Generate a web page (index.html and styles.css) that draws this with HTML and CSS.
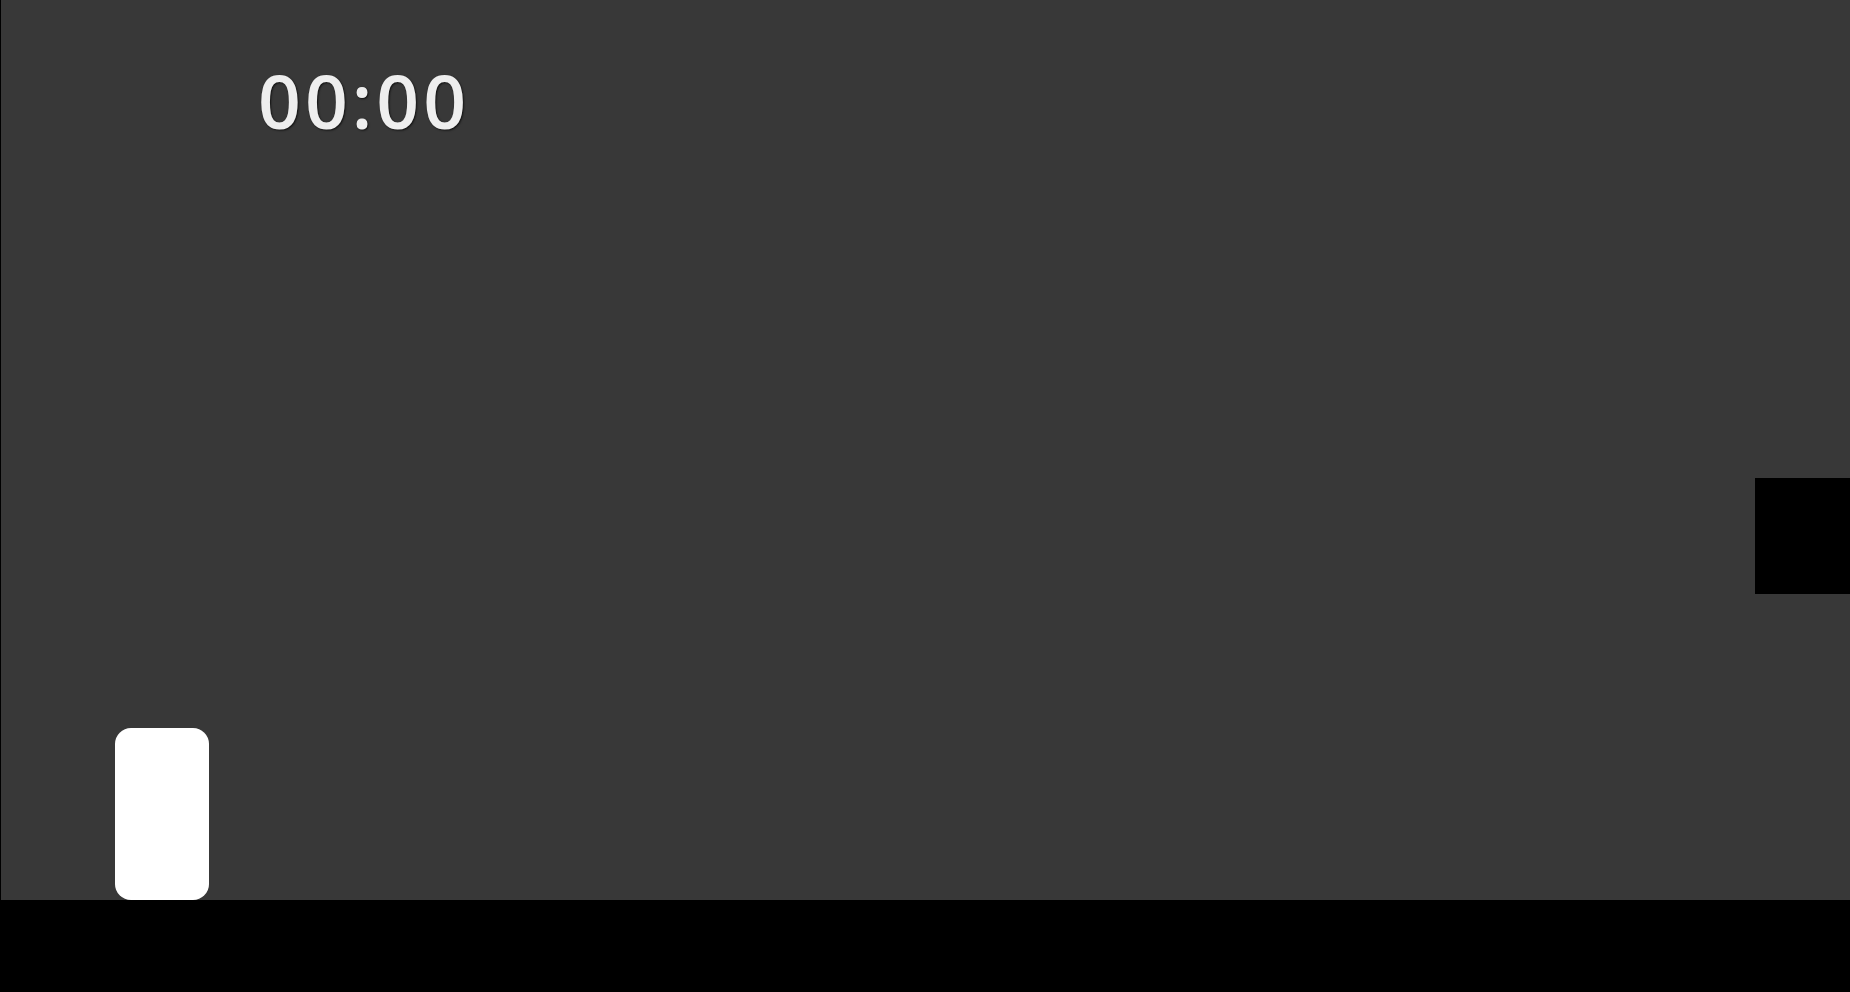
FILE: index.html
```html
<!DOCTYPE html>
<html lang="en">
<head>
    <meta charset="UTF-8">
    <meta name="viewport" content="width=device-width, initial-scale=1.0">
    <title>Timer</title>
    <link rel="stylesheet" href="styles.css">
</head>
<body>
    <div class="screen">
        <div class="stage">
            <div class="timer">00:00</div>
            <div class="side-panel"></div>
            <div class="record-btn"></div>
        </div>
        <div class="bottom-bar"></div>
    </div>
</body>
</html>
```
FILE: styles.css
```css
body {
    margin: 0;
    background-color: black;
    font-family: "Open Sans", Arial, sans-serif;
}
.screen {
    display: flex;
    flex-direction: column;
    height: 100vh;
}
.stage {
    flex: 1;
    display: flex;
    flex-direction: column;
    background-color: #383838;
    border-left: 1px solid black;
}
.timer {
    margin-top: 50px;
    padding-left: 257px;
    font-size: 75px;
    font-weight: 600;
    line-height: 100px;
    letter-spacing: 4px;
    color: #eeeeee;
    text-shadow: 1px 1px 2px rgba(0, 0, 0, 0.7);
}
.side-panel {
    align-self: flex-end;
    width: 95px;
    height: 116px;
    margin-top: 328px;
    background-color: black;
}
.record-btn {
    width: 94px;
    height: 172px;
    margin-top: auto;
    margin-left: 114px;
    background-color: white;
    border-radius: 16px;
}
.bottom-bar {
    height: 92px;
    background-color: black;
}
```
